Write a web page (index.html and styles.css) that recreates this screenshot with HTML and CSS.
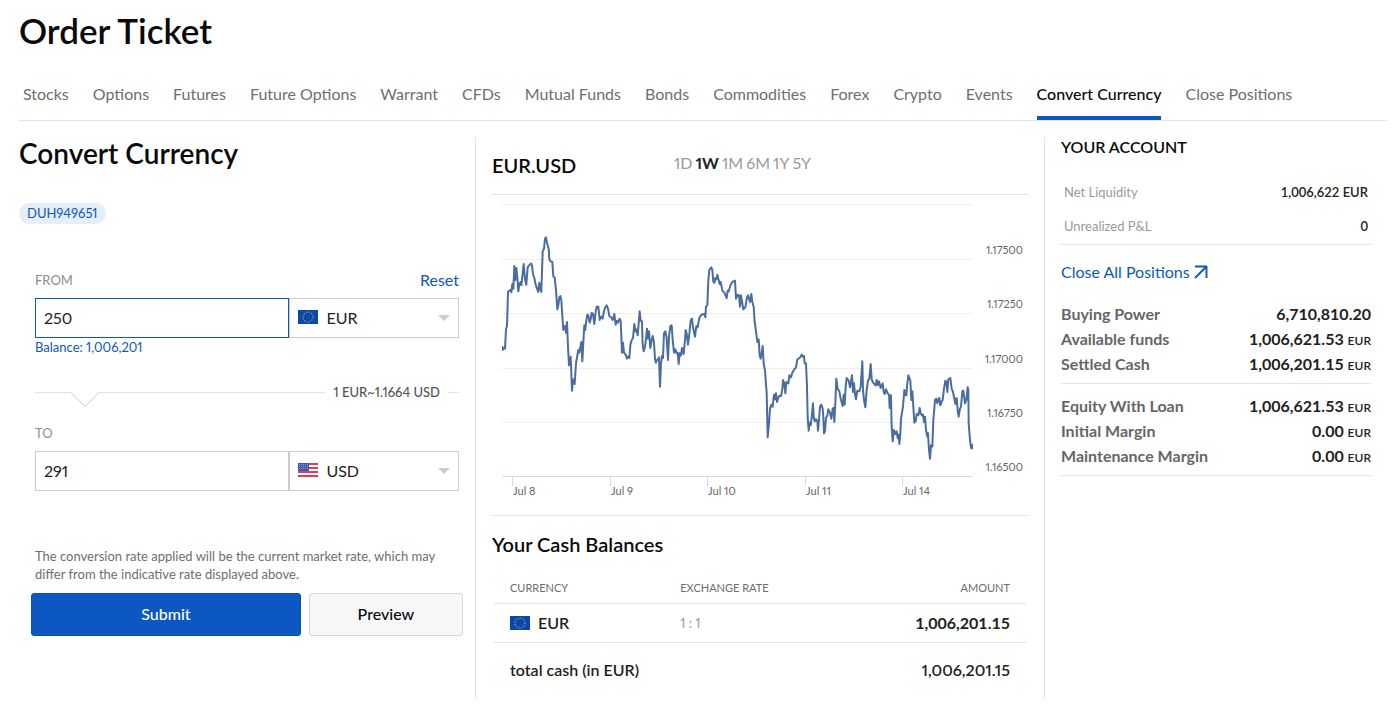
FILE: index.html
```html
<!DOCTYPE html>
<html lang="en">
<head>
<meta charset="utf-8">
<meta name="viewport" content="width=device-width, initial-scale=1">
<title>Order Ticket</title>
<link rel="stylesheet" href="styles.css">
</head>
<body>
<svg class="defs" aria-hidden="true">
  <symbol id="flag-eu" viewBox="0 0 20 14">
    <rect width="20" height="14" fill="#0b48ac"/>
    <circle cx="10" cy="7" r="5" fill="none" stroke="#a9a04a" stroke-width="1.2" stroke-dasharray="1.2 1.418"/>
  </symbol>
  <symbol id="flag-us" viewBox="0 0 20 14">
    <rect width="20" height="14" fill="#fff"/>
    <path d="M0 1h20M0 5h20M0 9h20M0 13h20" stroke="#e23c54" stroke-width="2"/>
    <rect width="11" height="8" fill="#3f56b0"/>
    <path d="M1 1.500h9M1 3.500h9M1 5.500h9" stroke="#8e9bd2" stroke-width="1" stroke-dasharray="1 1"/>
  </symbol>
</svg>
<main class="page">
  <h1 class="page-title">Order Ticket</h1>
  <nav class="tabs">
    <a href="#" class="tab">Stocks</a>
    <a href="#" class="tab">Options</a>
    <a href="#" class="tab">Futures</a>
    <a href="#" class="tab">Future Options</a>
    <a href="#" class="tab">Warrant</a>
    <a href="#" class="tab">CFDs</a>
    <a href="#" class="tab">Mutual Funds</a>
    <a href="#" class="tab">Bonds</a>
    <a href="#" class="tab">Commodities</a>
    <a href="#" class="tab">Forex</a>
    <a href="#" class="tab">Crypto</a>
    <a href="#" class="tab">Events</a>
    <a href="#" class="tab tab-active" aria-current="page">Convert Currency</a>
    <a href="#" class="tab">Close Positions</a>
  </nav>
  <div class="columns">
    <section class="convert">
      <h2 class="convert-title">Convert Currency</h2>
      <span class="account-pill">DUH949651</span>
      <form class="form">
        <div class="field-head">
          <label class="field-label" for="from">FROM</label>
          <button type="reset" class="reset">Reset</button>
        </div>
        <div class="field">
          <input class="amount amount-focus" id="from" type="text" value="250">
          <div class="picker">
            <svg class="flag"><use href="#flag-eu"/></svg>
            <select class="currency" aria-label="From currency"><option>EUR</option></select>
            <svg class="caret" viewBox="0 0 12 6"><path d="M0 0h12L6 6z" fill="#ccc"/></svg>
          </div>
        </div>
        <p class="balance">Balance: 1,006,201</p>
        <div class="rate">
          <span class="rule rule-start"></span>
          <svg class="notch" viewBox="0 0 28 15"><path d="M0 .5l14 14 14-14" fill="none" stroke="#e2e2e2" stroke-width="1.300"/></svg>
          <span class="rule rule-mid"></span>
          <span class="rate-text">1 EUR~1.1664 USD</span>
          <span class="rule rule-end"></span>
        </div>
        <div class="field-head">
          <label class="field-label" for="to">TO</label>
        </div>
        <div class="field">
          <input class="amount" id="to" type="text" value="291">
          <div class="picker">
            <svg class="flag"><use href="#flag-us"/></svg>
            <select class="currency" aria-label="To currency"><option>USD</option></select>
            <svg class="caret" viewBox="0 0 12 6"><path d="M0 0h12L6 6z" fill="#ccc"/></svg>
          </div>
        </div>
        <p class="note">The conversion rate applied will be the current market rate, which may differ from the indicative rate displayed above.</p>
        <div class="actions">
          <button type="button" class="btn btn-primary">Submit</button>
          <button type="button" class="btn">Preview</button>
        </div>
      </form>
    </section>
    <section class="market">
      <div class="chart-head">
        <h3 class="symbol">EUR.USD</h3>
        <div class="ranges">
          <button class="range">1D</button>
          <button class="range range-active">1W</button>
          <button class="range">1M</button>
          <button class="range">6M</button>
          <button class="range">1Y</button>
          <button class="range">5Y</button>
        </div>
      </div>
      <svg class="chart" viewBox="492 195 536 320" role="img" aria-label="EUR.USD price over one week">
        <path class="grid" d="M502 204.500H973M502 259.500H973M502 313.500H973M502 368.500H973M502 422.500H973"/>
        <path class="axis" d="M502 476.500H973M512.500 477v9M610.500 477v9M707.500 477v9M805.500 477v9M902.500 477v9"/>
        <svg x="502" y="190" width="471" height="320" viewBox="36 0 1413 960">
          <polyline class="price" points="36,468 38,480 40,474 45,476 48,418 51,408 54,306 58,302 62,300 64,307 67,282 70,296 73,228 76,270 79,234 82,262 85,304 88,282 92,276 94,286 98,250 101,222 105,268 109,284 113,232 117,226 123,220 126,226 129,252 133,264 137,284 141,296 145,306 148,278 151,296 154,306 158,184 162,176 165,146 168,142 171,158 176,176 178,208 182,214 187,216 190,260 194,262 198,300 202,358 205,346 208,322 211,318 214,330 217,378 220,420 223,410 226,408 228,428 231,396 234,470 237,526 242,500 246,602 249,568 252,570 254,582 258,520 262,496 265,480 268,488 272,466 274,456 277,514 281,440 283,406 286,420 289,392 292,374 295,376 299,398 302,388 305,368 309,372 313,402 317,366 320,350 325,350 329,390 333,380 338,386 341,368 345,354 350,346 354,356 358,378 363,382 368,390 373,372 377,404 380,392 384,398 389,386 392,392 396,488 399,458 402,488 407,494 411,506 414,500 418,504 421,466 425,450 429,444 433,402 436,424 439,418 443,436 446,400 449,364 452,392 456,394 458,464 461,484 465,470 468,446 471,416 474,446 477,424 481,474 485,450 488,438 492,458 495,508 498,518 501,510 504,508 507,502 510,590 513,520 516,498 519,504 522,430 526,424 530,444 534,510 537,440 541,408 545,406 548,450 552,488 556,478 560,490 563,488 566,522 569,490 573,496 576,474 581,492 585,450 587,420 590,430 594,464 598,432 602,392 606,386 609,412 615,440 619,408 623,412 628,384 634,374 643,372 646,382 648,350 652,346 655,270 658,240 664,232 667,240 670,276 673,278 676,264 679,268 682,254 686,270 689,282 692,276 697,302 703,308 710,324 713,302 716,304 722,284 727,276 735,272 738,326 743,314 747,316 750,350 753,316 757,340 760,358 766,352 771,322 774,316 780,336 784,312 787,336 791,350 794,396 798,424 802,456 806,448 809,496 812,506 815,490 818,468 821,520 825,542 828,582 830,608 833,742 837,700 840,656 844,644 848,650 852,614 855,628 858,610 861,636 867,618 873,618 877,598 879,570 883,580 886,610 889,576 895,580 898,556 903,562 907,548 913,538 918,532 922,508 929,504 935,494 939,500 942,498 944,520 948,520 951,590 953,680 956,722 959,698 962,706 965,684 969,640 971,680 974,694 978,688 982,694 984,722 987,690 990,650 994,644 998,656 1000,680 1002,730 1005,722 1008,684 1012,676 1015,658 1020,668 1024,686 1028,656 1030,654 1033,696 1036,640 1039,566 1043,596 1048,604 1052,626 1058,648 1061,614 1064,644 1067,590 1070,564 1076,572 1080,592 1086,556 1089,606 1092,580 1095,612 1098,628 1102,602 1108,604 1112,590 1117,514 1119,600 1122,630 1126,652 1130,600 1134,572 1138,566 1142,522 1145,568 1149,578 1157,586 1160,570 1163,586 1167,574 1172,594 1178,580 1181,606 1184,612 1188,598 1193,610 1197,614 1199,654 1203,616 1205,710 1208,754 1212,720 1216,732 1220,724 1223,744 1226,734 1228,762 1231,730 1233,686 1239,650 1243,600 1246,616 1249,616 1251,590 1255,556 1261,572 1264,630 1267,604 1270,650 1273,698 1277,694 1280,672 1285,676 1289,654 1292,670 1296,676 1299,674 1302,696 1305,680 1308,720 1312,740 1314,730 1317,780 1320,806 1323,766 1327,770 1330,690 1333,656 1335,630 1339,626 1342,640 1345,630 1348,624 1351,646 1355,634 1358,630 1362,596 1366,572 1369,576 1372,606 1375,568 1381,564 1385,596 1389,606 1393,626 1396,642 1400,624 1403,660 1406,680 1410,656 1413,650 1417,604 1420,602 1425,640 1429,630 1433,592 1435,600 1436,700 1440,750 1443,774 1446,764 1448,778"/>
        </svg>
        <g class="tick tick-price">
          <text x="1023" y="254">1.17500</text>
          <text x="1023" y="308">1.17250</text>
          <text x="1023" y="363">1.17000</text>
          <text x="1023" y="417">1.16750</text>
          <text x="1023" y="471">1.16500</text>
        </g>
        <g class="tick">
          <text x="513" y="495">Jul 8</text>
          <text x="611" y="495">Jul 9</text>
          <text x="708" y="495">Jul 10</text>
          <text x="806" y="495">Jul 11</text>
          <text x="903" y="495">Jul 14</text>
        </g>
      </svg>
      <h3 class="balances-title">Your Cash Balances</h3>
      <table class="balances">
        <thead>
          <tr><th>CURRENCY</th><th>EXCHANGE RATE</th><th class="num">AMOUNT</th></tr>
        </thead>
        <tbody>
          <tr>
            <td><span class="cur"><svg class="cur-flag"><use href="#flag-eu"/></svg>EUR</span></td>
            <td class="ratio">1 : 1</td>
            <td class="num">1,006,201.15</td>
          </tr>
        </tbody>
        <tfoot>
          <tr><td colspan="2">total cash (in EUR)</td><td class="num">1,006,201.15</td></tr>
        </tfoot>
      </table>
    </section>
    <aside class="account">
      <h3 class="account-title">YOUR ACCOUNT</h3>
      <dl class="summary">
        <div class="summary-row"><dt>Net Liquidity</dt><dd>1,006,622 EUR</dd></div>
        <div class="summary-row"><dt>Unrealized P&amp;L</dt><dd>0</dd></div>
      </dl>
      <a href="#" class="close-all">Close All Positions
        <svg class="arrow" viewBox="0 0 14 14"><path d="M1 13L12 2M1 1.500h12M12.500 1v12" fill="none" stroke="#0d57c2" stroke-width="1.900"/></svg>
      </a>
      <dl class="funds">
        <div class="fund"><dt>Buying Power</dt><dd>6,710,810.20</dd></div>
        <div class="fund"><dt>Available funds</dt><dd>1,006,621.53 <small>EUR</small></dd></div>
        <div class="fund"><dt>Settled Cash</dt><dd>1,006,201.15 <small>EUR</small></dd></div>
      </dl>
      <dl class="funds">
        <div class="fund"><dt>Equity With Loan</dt><dd>1,006,621.53 <small>EUR</small></dd></div>
        <div class="fund"><dt>Initial Margin</dt><dd>0.00 <small>EUR</small></dd></div>
        <div class="fund"><dt>Maintenance Margin</dt><dd>0.00 <small>EUR</small></dd></div>
      </dl>
    </aside>
  </div>
</main>
</body>
</html>
```
FILE: styles.css
```css
* { box-sizing: border-box; }
body {
  margin: 0;
  background: #fff;
  color: #222;
  font-family: Lato, "Open Sans", sans-serif;
  font-size: 16px;
  line-height: 24px;
  font-variant-numeric: proportional-nums;
}
h1, h2, h3, p, dl, dd { margin: 0; }
h1, h2, h3 { color: #0a0a0a; font-weight: 600; }
button, input, select { font: inherit; color: inherit; font-variant-numeric: inherit; }
a { text-decoration: none; }
.defs { position: absolute; width: 0; height: 0; }

.page { padding: 7px 10px 16px 19px; }
.page-title { font-size: 35px; line-height: 46px; }

.tabs {
  display: flex;
  gap: 24px;
  margin-top: 17px;
  padding-left: 4px;
  border-bottom: 1px solid #e2e2e2;
}
.tab {
  padding: 12px 0 10px;
  border-bottom: 4px solid transparent;
  color: #6e6e6e;
  white-space: nowrap;
}
.tab-active { border-color: #0d57c2; color: #0a0a0a; font-weight: 500; }

.columns {
  display: grid;
  grid-template-columns: 4fr 5fr 3fr;
  margin-top: 16px;
}

.convert-title { font-size: 28px; line-height: 32px; }
.account-pill {
  display: inline-block;
  margin-top: 34px;
  padding: 0 8px;
  border-radius: 11px;
  background: #e5eef9;
  color: #0d57c2;
  font-size: 13px;
  line-height: 21px;
}
.form { padding: 42px 16px 0; }
.field-head { display: flex; justify-content: space-between; align-items: flex-start; height: 32px; padding-top: 2px; }
.field-label { color: #8e8e8e; font-size: 13px; }
.reset { padding: 0; border: 0; background: none; color: #0d57c2; }
.field { display: grid; grid-template-columns: 3fr 2fr; height: 40px; }
.amount {
  min-width: 0;
  padding: 0 8px;
  border: 1px solid #ccc;
  border-radius: 0;
  outline: none;
}
.amount-focus { border-color: #0d57c2; }
.picker { position: relative; }
.currency {
  width: 100%;
  height: 100%;
  padding: 0 24px 0 36px;
  border: 1px solid #ccc;
  border-radius: 0;
  background: #fff;
  appearance: none;
}
.flag { position: absolute; left: 9px; top: 12px; width: 20px; height: 14px; }
.caret { position: absolute; right: 9px; top: 17px; width: 12px; height: 6px; pointer-events: none; }
.balance { color: #0d57c2; font-size: 13px; line-height: 18px; }
.rate { display: flex; align-items: flex-start; height: 30px; margin-top: 27px; }
.rule { height: 1px; margin-top: 9px; background: #e2e2e2; }
.rule-start { width: 36px; }
.rule-mid { flex: 1; }
.rule-end { width: 11px; }
.notch { width: 28px; height: 15px; margin-top: 9px; }
.rate-text { padding: 0 8px; color: #555; font-size: 13px; line-height: 18px; font-weight: 500; }
.rate + .field-head { margin-top: 6px; }
.note { margin: 56px 0 10px; color: #6e6e6e; font-size: 13px; line-height: 18px; }
.actions { display: grid; grid-template-columns: 7fr 4fr; gap: 8px; margin: 0 -4px; }
.btn {
  height: 43px;
  padding: 0 0 2px;
  border: 1px solid #d8d8d8;
  border-radius: 3px;
  background: #f7f7f7;
  color: #0a0a0a;
  font-weight: 500;
}
.btn-primary { border-color: #0b4fb0; background: #0d57c2; color: #fff; }

.market { padding: 0 16px; border: solid #e2e2e2; border-width: 0 1px; }
.chart-head {
  display: grid;
  grid-template-columns: 182px 1fr;
  height: 58px;
  padding-top: 16px;
  border-bottom: 1px solid #e2e2e2;
}
.symbol { font-size: 20px; }
.ranges { display: flex; gap: 3px; align-items: flex-start; }
.range { padding: 0; border: 0; background: none; color: #999; line-height: 20px; }
.range-active { color: #222; font-weight: 700; }
.chart { display: block; width: 100%; }
.grid { fill: none; stroke: #efefef; }
.axis { fill: none; stroke: #ccdcf0; }
.price { fill: none; stroke: #4a6d9e; stroke-width: 6; stroke-linejoin: round; }
.tick { fill: #666; font-size: 11px; }
.tick-price { text-anchor: end; }
.balances-title {
  padding-top: 16px;
  border-top: 1px solid #e2e2e2;
  font-size: 20px;
}
.balances { width: calc(100% - 4px); margin: 18px 2px 0; border-collapse: collapse; text-align: left; font-weight: 600; }
.balances th, .balances td { padding: 0 16px; }
.balances th { height: 29px; width: 32%; color: #6e6e6e; font-size: 11px; font-weight: 400; border-bottom: 1px solid #e2e2e2; }
.balances th:nth-child(2) { width: 36%; }
.balances tbody td { height: 39px; border-bottom: 1px solid #e2e2e2; }
.balances tfoot td { height: 56px; }
.balances .num { text-align: right; }
.balances tbody .num { font-variant-numeric: tabular-nums; font-weight: 700; }
.balances .ratio { color: #999; font-size: 13px; font-weight: 400; }
.cur { display: flex; align-items: center; gap: 8px; }
.cur-flag { width: 20px; height: 14px; }

.account { min-height: 561px; padding: 0 16px; font-variant-numeric: tabular-nums; }
.account-title { font-size: 16px; line-height: 20px; }
.summary { padding: 18px 3px 1px; border-bottom: 1px solid #e2e2e2; font-size: 13px; }
.summary-row { display: flex; justify-content: space-between; height: 34px; line-height: 34px; }
.summary dt { color: #999; }
.summary dd { font-weight: 600; }
.close-all { display: flex; align-items: center; gap: 4px; margin: 15px 0 17px; color: #0d57c2; }
.arrow { width: 14px; height: 14px; }
.funds { padding-bottom: 7px; border-bottom: 1px solid #e2e2e2; }
.funds + .funds { padding-top: 9px; }
.fund { display: flex; justify-content: space-between; line-height: 25px; font-weight: 700; }
.fund dt { color: #666; }
.fund small { font-size: 12px; font-weight: 600; line-height: 1; }
```
